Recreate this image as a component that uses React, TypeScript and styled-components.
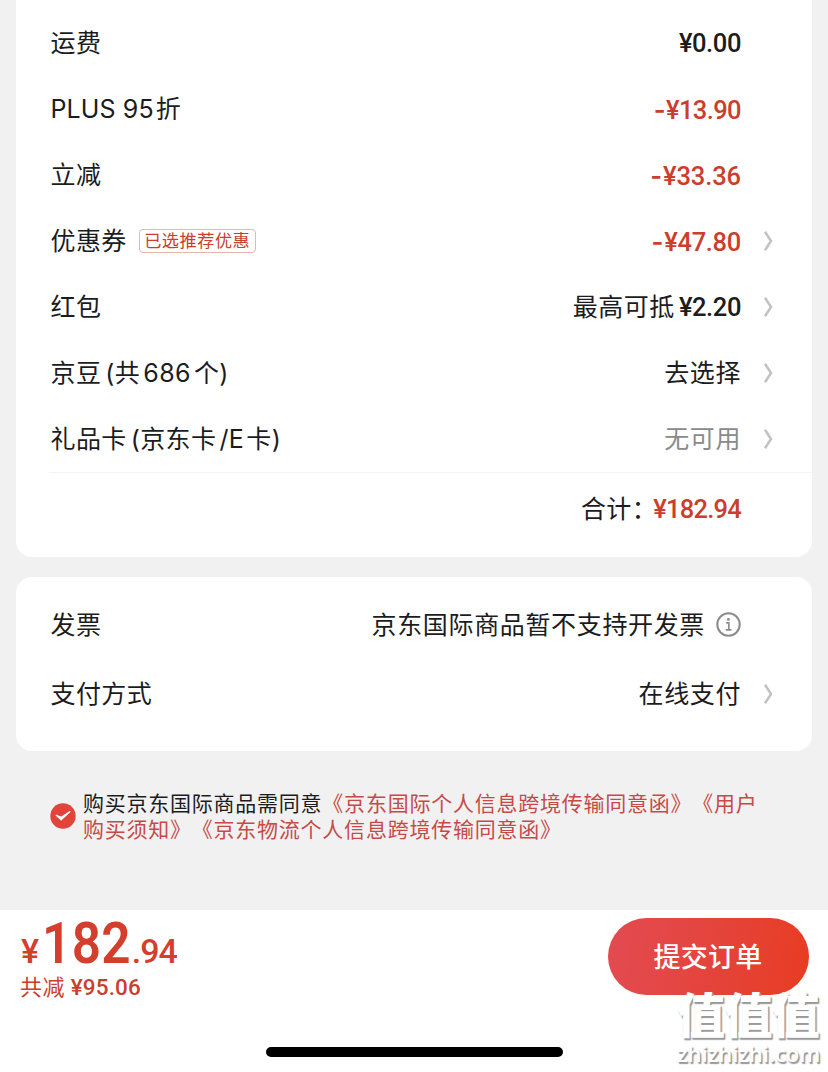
import React from "react";
import styled, { createGlobalStyle } from "styled-components";

const GlobalStyle = createGlobalStyle`
  * { box-sizing: border-box; }
  body {
    margin: 0;
    background: #f1f1f1;
    color: #1c1c1e;
    font-family: Inter, "Noto Sans CJK SC", sans-serif;
    font-size: 25px;
    text-spacing-trim: space-all;
  }
`;

const RED = "#cb3e2e";

const Page = styled.main`
  display: flex;
  flex-direction: column;
  width: 828px;
  height: 1072px;
  overflow: hidden;
  position: relative;
`;

const Card = styled.section<{ $first?: boolean }>`
  margin: ${(p) => (p.$first ? "0 16px 20px" : "0 16px")};
  height: ${(p) => (p.$first ? 557 : 174)}px;
  padding-top: ${(p) => (p.$first ? 10 : 13)}px;
  background: #fff;
  border-radius: ${(p) => (p.$first ? "0 0 16px 16px" : "16px")};
`;

const Row = styled.div<{ $height?: number }>`
  display: flex;
  align-items: center;
  height: ${(p) => p.$height ?? 66}px;
  padding-left: 34.5px;
  white-space: nowrap;
`;

const Label = styled.div`
  display: flex;
  align-items: center;
  flex: 1;
`;

const Txt = styled.span<{ $ls?: number; $muted?: boolean; $ml?: number }>`
  font-weight: 400;
  line-height: 36px;
  letter-spacing: ${(p) => p.$ls ?? 0.4}px;
  margin-left: ${(p) => p.$ml ?? 0}px;
  color: ${(p) => (p.$muted ? "#8a8a8a" : "inherit")};
`;

const Tag = styled.span`
  display: flex;
  align-items: center;
  justify-content: center;
  width: 117px;
  height: 24px;
  margin-left: 12px;
  border: 1px solid #e9b5ae;
  border-radius: 4px;
  color: ${RED};
  font-size: 17.2px;
  line-height: 22px;
  letter-spacing: 0.5px;
`;

const Value = styled.div`
  display: flex;
  align-items: center;
`;

const Money = styled.span<{ $red?: boolean; $ml?: number; $ls?: number }>`
  font-family: Roboto, sans-serif;
  font-weight: 550;
  font-size: 25.5px;
  line-height: 35px;
  padding-top: 1px;
  letter-spacing: ${(p) => p.$ls ?? -0.4}px;
  margin-left: ${(p) => p.$ml ?? 0}px;
  color: ${(p) => (p.$red ? RED : "inherit")};
`;

const Minus = styled.span`
  font-family: Inter, sans-serif;
  font-weight: 600;
  margin-right: 1px;
`;

const Slot = styled.div`
  display: flex;
  width: 71px;
  padding-left: 22px;
`;

const Chevron = () => (
  <svg width="12" height="22" viewBox="0 0 12 22" fill="none">
    <path d="M2 1.8L8 11L2 20.2" stroke="#c2c2c2" strokeWidth="2.5" />
  </svg>
);

const InfoIcon = styled.svg`
  margin-left: 11px;
`;

const Divider = styled.div`
  height: 1px;
  margin-left: 33px;
  background: #f5f5f5;
`;

const Consent = styled.div`
  display: flex;
  align-items: center;
  margin: 39px 50px 0;
  height: 52px;
`;

const ConsentText = styled.p`
  flex: none;
  width: 690px;
  margin: -1px 0 0 7px;
  font-size: 21px;
  font-weight: 400;
  line-height: 25.5px;
  letter-spacing: 0.76px;
  font-family: "Noto Sans CJK SC", sans-serif;
`;

const Agreement = styled.span`
  color: #c64a48;
`;

const Footer = styled.footer`
  display: flex;
  justify-content: space-between;
  height: 162px;
  margin-top: auto;
  padding: 8px 19px 0 21px;
  background: #fff;
`;

const Summary = styled.div`
  display: flex;
  flex-direction: column;
`;

const Price = styled.div`
  display: flex;
  align-items: baseline;
  height: 52px;
  color: #d43e2d;
  font-family: Roboto, sans-serif;
  line-height: 52px;
`;

const Small = styled.span`
  font-size: 34px;
  font-weight: 550;
  letter-spacing: -1.1px;
`;

const Big = styled.span`
  font-size: 57px;
  font-weight: 650;
  letter-spacing: 0.4px;
  margin: 0 -9px 0 4px;
  transform: scaleX(0.9);
  transform-origin: left;
`;

const Saved = styled.div`
  display: flex;
  align-items: center;
  gap: 6px;
  height: 34px;
  margin-left: -1px;
  color: ${RED};
  font-size: 22px;
`;

const SavedMoney = styled(Money)`
  font-size: 22.5px;
  font-weight: 500;
  letter-spacing: 0.1px;
`;

const Submit = styled.button`
  width: 201px;
  height: 77px;
  padding: 0 1px 2px 0;
  border: 0;
  border-radius: 39px;
  background: linear-gradient(100deg, #e34b52 0%, #e4443d 50%, #e83c22 100%);
  color: #fff;
  font: 500 27px "Noto Sans CJK SC", sans-serif;
  letter-spacing: 0.3px;
`;

const HomeBar = styled.div`
  position: absolute;
  left: 266px;
  top: 1047px;
  width: 297px;
  height: 10px;
  border-radius: 5px;
  background: #000;
`;

const Watermark = styled.div`
  position: absolute;
  left: 677px;
  top: 985px;
  width: 146px;
  display: flex;
  flex-direction: column;
  color: #fff;
  text-shadow: 1.5px 1.5px 1px #999, 1px 1px 2px #bbb;
  font-family: "Noto Sans CJK SC", sans-serif;
  white-space: nowrap;
`;

const MarkName = styled.span`
  font-size: 48px;
  font-weight: 900;
  line-height: 54px;
  letter-spacing: -0.6px;
`;

const MarkSite = styled.span`
  margin-top: 2px;
  font: 600 22px/24px "Open Sans", sans-serif;
`;

export default function App() {
  return (
    <>
      <GlobalStyle />
      <Page>
        <Card $first>
          <Row>
            <Label><Txt>运费</Txt></Label>
            <Value><Money>¥0.00</Money></Value>
            <Slot />
          </Row>
          <Row>
            <Label><Txt $ls={0.1}>PLUS 95</Txt><Txt $ml={2}>折</Txt></Label>
            <Value><Money $red $ls={-0.6}><Minus>-</Minus>¥13.90</Money></Value>
            <Slot />
          </Row>
          <Row>
            <Label><Txt>立减</Txt></Label>
            <Value><Money $red $ls={-0.1}><Minus>-</Minus>¥33.36</Money></Value>
            <Slot />
          </Row>
          <Row>
            <Label><Txt>优惠券</Txt><Tag>已选推荐优惠</Tag></Label>
            <Value><Money $red $ls={-0.3}><Minus>-</Minus>¥47.80</Money></Value>
            <Slot><Chevron /></Slot>
          </Row>
          <Row>
            <Label><Txt>红包</Txt></Label>
            <Value><Txt $ls={0.5}>最高可抵</Txt><Money $ml={4}>¥2.20</Money></Value>
            <Slot><Chevron /></Slot>
          </Row>
          <Row>
            <Label>
              <Txt>京豆</Txt><Txt $ml={4}>(共</Txt><Txt $ml={3}>686</Txt><Txt $ml={3}>个)</Txt>
            </Label>
            <Value><Txt $ls={0.6}>去选择</Txt></Value>
            <Slot><Chevron /></Slot>
          </Row>
          <Row>
            <Label>
              <Txt>礼品卡</Txt><Txt $ml={4}>(京东卡</Txt><Txt $ml={3}>/E</Txt><Txt $ml={2}>卡)</Txt>
            </Label>
            <Value><Txt $muted $ls={0.6}>无可用</Txt></Value>
            <Slot><Chevron /></Slot>
          </Row>
          <Divider />
          <Row $height={72}>
            <Label />
            <Value><Txt>合计：</Txt><Money $red $ml={-4} $ls={-0.75}>¥182.94</Money></Value>
            <Slot />
          </Row>
        </Card>

        <Card>
          <Row $height={69}>
            <Label><Txt>发票</Txt></Label>
            <Value>
              <Txt $ls={0.65}>京东国际商品暂不支持开发票</Txt>
              <InfoIcon width="25" height="25" viewBox="0 0 25 25" fill="none" stroke="#8b8b8b">
                <circle cx="12.5" cy="12.5" r="11.2" strokeWidth="2" />
                <path d="M10.2 10.8H12.8V17.6M9.8 17.8H15.4" strokeWidth="1.7" />
                <circle cx="12.4" cy="7.4" r="1.4" fill="#8b8b8b" stroke="none" />
              </InfoIcon>
            </Value>
            <Slot />
          </Row>
          <Row $height={70}>
            <Label><Txt>支付方式</Txt></Label>
            <Value><Txt $ls={0.6}>在线支付</Txt></Value>
            <Slot><Chevron /></Slot>
          </Row>
        </Card>

        <Consent>
          <svg width="26" height="26" viewBox="0 0 26 26">
            <circle cx="13" cy="13" r="12.7" fill="#e2433b" />
            <path d="M6.2 12.2L11.2 16.8L20 8.6L11.2 14.2Z" fill="#fff" stroke="#fff" strokeWidth="1.2" strokeLinejoin="round" />
          </svg>
          <ConsentText>
            购买京东国际商品需同意<Agreement>《京东国际个人信息跨境传输同意函》《用户<br />购买须知》《京东物流个人信息跨境传输同意函》</Agreement>
          </ConsentText>
        </Consent>

        <Footer>
          <Summary>
            <Price><Small>¥</Small><Big>182</Big><Small>.94</Small></Price>
            <Saved><Txt>共减</Txt><SavedMoney>¥95.06</SavedMoney></Saved>
          </Summary>
          <Submit>提交订单</Submit>
        </Footer>
        <HomeBar />
        <Watermark>
          <MarkName>值值值</MarkName>
          <MarkSite>zhizhizhi.com</MarkSite>
        </Watermark>
      </Page>
    </>
  );
}
